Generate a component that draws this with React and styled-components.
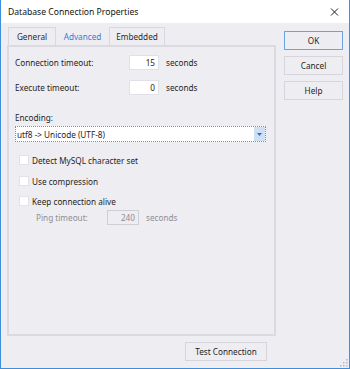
import React from 'react';
import styled, { createGlobalStyle } from 'styled-components';

const Global = createGlobalStyle`
  html, body { margin: 0; padding: 0; background: #eeedf2; }
  * { box-sizing: border-box; }
`;

const Window = styled.div`
  width: 350px;
  height: 369px;
  display: flex;
  flex-direction: column;
  background: #eeedf2;
  border: 1px solid #3d8fdc;
  border-top: none;
  font-family: "Noto Sans", "Liberation Sans", sans-serif;
  font-size: 8.2px;
  color: #1e1e1e;
  position: relative;
  overflow: hidden;
`;

const TitleBar = styled.div`
  height: 23px;
  background: #ffffff;
  display: flex;
  align-items: center;
  justify-content: space-between;
  padding: 0 4px 0 7px;
  font-size: 8.6px;
  color: #111;
`;

const Body = styled.div`
  flex: 1;
  display: flex;
  gap: 8px;
  padding: 4px 6px 0 6px;
`;

const LeftCol = styled.div`
  width: 269px;
  display: flex;
  flex-direction: column;
`;

const RightCol = styled.div`
  width: 59px;
  display: flex;
  flex-direction: column;
  gap: 6px;
  padding-top: 4px;
`;

const TabStrip = styled.div`
  display: flex;
  height: 18px;
  padding-left: 2px;
`;

const Tab = styled.div`
  width: ${p => p.w}px;
  height: 18px;
  display: flex;
  align-items: center;
  justify-content: center;
  border: 1px solid ${p => (p.active ? 'transparent' : '#d9d8de')};
  border-bottom: none;
  margin-left: -1px;
  color: ${p => (p.active ? '#3a7bd5' : '#2a2a2a')};
`;

const Panel = styled.div`
  height: 291px;
  border: 2px solid #dbdae0;
  padding: 8px 0 0 6px;
  display: flex;
  flex-direction: column;
`;

const Row = styled.div`
  display: flex;
  align-items: center;
  margin-top: ${p => p.mt || 0}px;
  height: ${p => p.h || 15}px;
`;

const Label = styled.span`
  width: ${p => p.w}px;
  color: ${p => (p.dim ? '#8e8e93' : 'inherit')};
  padding-left: ${p => p.indent || 0}px;
`;

const NumInput = styled.div`
  width: ${p => p.w}px;
  height: 15px;
  background: ${p => (p.disabled ? '#eeedf2' : '#ffffff')};
  border: 1px solid ${p => (p.disabled ? '#cfced4' : '#e1e0e6')};
  color: ${p => (p.disabled ? '#8e8e93' : '#1e1e1e')};
  display: flex;
  align-items: center;
  justify-content: flex-end;
  padding-right: 3px;
`;

const Unit = styled.span`
  margin-left: 7px;
  color: ${p => (p.dim ? '#8e8e93' : 'inherit')};
`;

const Select = styled.div`
  width: 251px;
  height: 16px;
  margin-top: 2px;
  background: #ffffff;
  border: 1px dotted #8c8c8c;
  display: flex;
  align-items: center;
  justify-content: space-between;
  padding-left: 1px;
`;

const DropBtn = styled.div`
  width: 11px;
  height: 14px;
  background: #cfe0f3;
  display: flex;
  align-items: center;
  justify-content: center;
`;

const Check = styled.div`
  display: flex;
  align-items: center;
  gap: 3px;
  height: 14px;
  margin-top: ${p => p.mt}px;
  padding-left: 4px;
`;

const Box = styled.div`
  width: 10px;
  height: 10px;
  background: #ffffff;
  border: 1px solid #e3e2e8;
`;

const Button = styled.div`
  height: 19px;
  display: flex;
  align-items: center;
  justify-content: center;
  background: #eeedf2;
  border: 1px solid ${p => (p.primary ? '#6aa3e0' : '#d6d5db')};
  color: #1e1e1e;
`;

const Footer = styled.div`
  display: flex;
  justify-content: flex-end;
  padding-right: 9px;
  margin-top: 6px;
`;

const TestBtn = styled(Button)`
  width: 82px;
`;

const Grip = styled.svg`
  position: absolute;
  right: 1px;
  bottom: 1px;
`;

export default function App() {
  return (
    <>
      <Global />
      <Window>
        <TitleBar>
          <span>Database Connection Properties</span>
          <svg width="20" height="14" viewBox="0 0 20 14">
            <path d="M6 3.5 L13 10.5 M13 3.5 L6 10.5" stroke="#222" strokeWidth="1" />
          </svg>
        </TitleBar>
        <Body>
          <LeftCol>
            <TabStrip>
              <Tab w={48}>General</Tab>
              <Tab w={55} active>Advanced</Tab>
              <Tab w={56}>Embedded</Tab>
            </TabStrip>
            <Panel>
              <Row>
                <Label w={114}>Connection timeout:</Label>
                <NumInput w={30}>15</NumInput>
                <Unit>seconds</Unit>
              </Row>
              <Row mt={10}>
                <Label w={114}>Execute timeout:</Label>
                <NumInput w={30}>0</NumInput>
                <Unit>seconds</Unit>
              </Row>
              <Row mt={15} h={14}>
                <Label w={100}>Encoding:</Label>
              </Row>
              <Select>
                <span>utf8 -&gt; Unicode (UTF-8)</span>
                <DropBtn>
                  <svg width="5" height="3" viewBox="0 0 5 3">
                    <path d="M0 0 L5 0 L2.5 3 Z" fill="#2f6fc4" />
                  </svg>
                </DropBtn>
              </Select>
              <Check mt={11}>
                <Box />
                <span>Detect MySQL character set</span>
              </Check>
              <Check mt={7}>
                <Box />
                <span>Use compression</span>
              </Check>
              <Check mt={6}>
                <Box />
                <span>Keep connection alive</span>
              </Check>
              <Row mt={2}>
                <Label w={92} dim indent={21}>Ping timeout:</Label>
                <NumInput w={32} disabled>240</NumInput>
                <Unit dim>seconds</Unit>
              </Row>
            </Panel>
            <Footer>
              <TestBtn>Test Connection</TestBtn>
            </Footer>
          </LeftCol>
          <RightCol>
            <Button primary>OK</Button>
            <Button>Cancel</Button>
            <Button>Help</Button>
          </RightCol>
        </Body>
        <Grip width="8" height="8" viewBox="0 0 8 8">
          <rect x="6" y="0" width="1.5" height="1.5" fill="#b8b7bd" />
          <rect x="3" y="3" width="1.5" height="1.5" fill="#b8b7bd" />
          <rect x="6" y="3" width="1.5" height="1.5" fill="#b8b7bd" />
          <rect x="0" y="6" width="1.5" height="1.5" fill="#b8b7bd" />
          <rect x="3" y="6" width="1.5" height="1.5" fill="#b8b7bd" />
          <rect x="6" y="6" width="1.5" height="1.5" fill="#b8b7bd" />
        </Grip>
      </Window>
    </>
  );
}
